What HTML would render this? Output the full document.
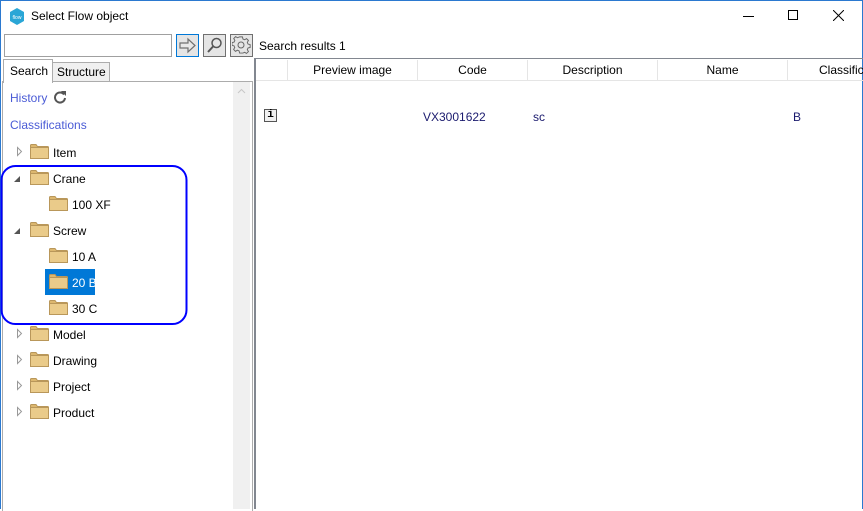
<!DOCTYPE html>
<html><head><style>
*{margin:0;padding:0;box-sizing:border-box}
body{width:863px;height:509px;overflow:hidden;background:#fff;font-family:"Liberation Sans",sans-serif;font-size:12px;color:#000;position:relative}
.a{position:absolute}
.fold{position:absolute;width:19px;height:15px}
.t{position:absolute;font-size:12px}
</style></head><body>
<div class="a" style="left:0;top:0;width:863px;height:509px;border:1px solid #2b79d0;border-bottom:none"></div>
<!-- title -->
<svg class="a" style="left:9px;top:8px" width="16" height="17" viewBox="0 0 16 17"><polygon points="8,0 15,4 15,13 8,17 1,13 1,4" fill="#2aa6d6"/><text x="8" y="11" font-size="5" fill="#fff" text-anchor="middle" font-family="Liberation Sans">flow</text></svg>
<div class="t" style="left:31px;top:9px;font-size:12px">Select Flow object</div>
<div class="a" style="left:743px;top:16px;width:11px;height:1px;background:#000"></div>
<div class="a" style="left:788px;top:10px;width:10px;height:10px;border:1px solid #000"></div>
<svg class="a" style="left:833px;top:10px" width="11" height="11"><path d="M0 0L11 11M11 0L0 11" stroke="#000" stroke-width="1"/></svg>
<!-- toolbar -->
<div class="a" style="left:4px;top:34px;width:168px;height:23px;border:1px solid #a0a0a0;background:#fff"></div>
<div class="a" style="left:176px;top:34px;width:23px;height:23px;border:1px solid #0078d7;background:#e5e5e5"></div>
<svg class="a" style="left:178px;top:36px" width="19" height="19"><path d="M2 7h8V3l7 6.5-7 6.5v-4H2z" fill="#e8e8e8" stroke="#707070" stroke-width="1.2"/></svg>
<div class="a" style="left:203px;top:34px;width:23px;height:23px;border:1px solid #707070;background:#e5e5e5"></div>
<svg class="a" style="left:205px;top:36px" width="19" height="19"><circle cx="11.5" cy="7" r="4.5" fill="none" stroke="#555" stroke-width="1.5"/><path d="M8.5 10L3 16" stroke="#555" stroke-width="2"/></svg>
<div class="a" style="left:230px;top:34px;width:23px;height:23px;border:1px solid #707070;background:#e5e5e5"></div>
<svg class="a" style="left:232px;top:36px" width="19" height="19" viewBox="0 0 19 19"><path d="M8 2h3l.5 2.2 1.8.8 2-1.2 2 2-1.2 2 .8 1.8 2.2.5v3l-2.2.5-.8 1.8 1.2 2-2 2-2-1.2-1.8.8L11 19H8l-.5-2.2-1.8-.8-2 1.2-2-2 1.2-2-.8-1.8L0 11V8l2.2-.5.8-1.8-1.2-2 2-2 2 1.2 1.8-.8z" transform="translate(0,-1) scale(.95)" fill="none" stroke="#666" stroke-width="1"/><circle cx="9" cy="9" r="3" fill="none" stroke="#666"/></svg>
<div class="t" style="left:259px;top:39px">Search results 1</div>
<!-- tabs -->
<div class="a" style="left:52px;top:62px;width:58px;height:20px;border:1px solid #acacac;background:#f0f0f0"></div>
<div class="t" style="left:57px;top:65px">Structure</div>
<div class="a" style="left:2px;top:81px;width:251px;height:430px;border:1px solid #acacac;border-bottom:none"></div>
<div class="a" style="left:3px;top:59px;width:50px;height:24px;border:1px solid #acacac;border-bottom:none;background:#fff"></div>
<div class="t" style="left:10px;top:64px">Search</div>
<div class="a" style="left:233px;top:82px;width:17px;height:427px;background:#f0f0f0"></div>
<svg class="a" style="left:237px;top:88px" width="9" height="6"><path d="M1 5l3.5-3.5L8 5" fill="none" stroke="#c8c8c8"/></svg>
<div class="t" style="left:10px;top:91px;color:#4a5bd6">History</div>
<svg class="a" style="left:53px;top:90px" width="14" height="14"><path d="M11 4.5A5 5 0 1 0 12 8" fill="none" stroke="#555" stroke-width="2"/><path d="M8 1h5v5z" fill="#555"/></svg>
<div class="t" style="left:10px;top:118px;color:#4a5bd6">Classifications</div>
<!-- tree -->
<svg class="a" style="left:0;top:0" width="255" height="509">
<defs><g id="f"><path d="M0.5 3.5V1.5Q0.5 0.5 1.5 0.5H6l1.5 2H17.5Q18.5 2.5 18.5 3.5V14.5H0.5Z" fill="#dcb76f" stroke="#b9975a"/><rect x="0.5" y="3.5" width="18" height="11" fill="#eacb8a" stroke="#b9975a"/></g></defs>
<g fill="none" stroke="#999"><path d="M17.5 147.5l4 4-4 4z"/><path d="M17.5 329.5l4 4-4 4z"/><path d="M17.5 355.5l4 4-4 4z"/><path d="M17.5 381.5l4 4-4 4z"/><path d="M17.5 407.5l4 4-4 4z"/></g>
<path d="M14 182h6v-6z" fill="#555"/><path d="M14 234h6v-6z" fill="#555"/>
<rect x="45" y="269" width="50" height="26" fill="#0078d7"/>
<use href="#f" x="30" y="144"/><use href="#f" x="30" y="170"/><use href="#f" x="49" y="196"/><use href="#f" x="30" y="222"/><use href="#f" x="49" y="248"/><use href="#f" x="49" y="274"/><use href="#f" x="49" y="300"/><use href="#f" x="30" y="326"/><use href="#f" x="30" y="352"/><use href="#f" x="30" y="378"/><use href="#f" x="30" y="404"/>
<rect x="1.5" y="166" width="185" height="158" rx="14" fill="none" stroke="#0000ff" stroke-width="2"/>
</svg>
<div class="t" style="left:53px;top:146px">Item</div>
<div class="t" style="left:53px;top:172px">Crane</div>
<div class="t" style="left:72px;top:198px">100 XF</div>
<div class="t" style="left:53px;top:224px">Screw</div>
<div class="t" style="left:72px;top:250px">10 A</div>
<div class="t" style="left:72px;top:276px;color:#fff">20 B</div>
<div class="t" style="left:72px;top:302px">30 C</div>
<div class="t" style="left:53px;top:328px">Model</div>
<div class="t" style="left:53px;top:354px">Drawing</div>
<div class="t" style="left:53px;top:380px">Project</div>
<div class="t" style="left:53px;top:406px">Product</div>
<!-- right -->
<div class="a" style="left:254px;top:58px;width:609px;height:451px;border-left:2px solid #828790;border-top:1px solid #828790"></div>
<div class="a" style="left:256px;top:59px;width:607px;height:22px;border-bottom:1px solid #e5e5e5"></div>
<div class="a" style="left:287px;top:60px;width:1px;height:20px;background:#e5e5e5"></div>
<div class="a" style="left:417px;top:60px;width:1px;height:20px;background:#e5e5e5"></div>
<div class="a" style="left:527px;top:60px;width:1px;height:20px;background:#e5e5e5"></div>
<div class="a" style="left:657px;top:60px;width:1px;height:20px;background:#e5e5e5"></div>
<div class="a" style="left:787px;top:60px;width:1px;height:20px;background:#e5e5e5"></div>
<div class="t" style="left:288px;top:63px;width:129px;text-align:center">Preview image</div>
<div class="t" style="left:418px;top:63px;width:109px;text-align:center">Code</div>
<div class="t" style="left:528px;top:63px;width:129px;text-align:center">Description</div>
<div class="t" style="left:658px;top:63px;width:129px;text-align:center">Name</div>
<div class="t" style="left:819px;top:63px">Classific</div>
<div class="a" style="left:264px;top:109px;width:13px;height:13px;border:1px solid #555;background:#f0f0f0;font:bold 11px 'Liberation Mono',monospace;text-align:center;line-height:11px">i</div>
<div class="t" style="left:423px;top:110px;color:#1a1a6e">VX3001622</div>
<div class="t" style="left:533px;top:110px;color:#1a1a6e">sc</div>
<div class="t" style="left:793px;top:110px;color:#1a1a6e">B</div>
</body></html>
